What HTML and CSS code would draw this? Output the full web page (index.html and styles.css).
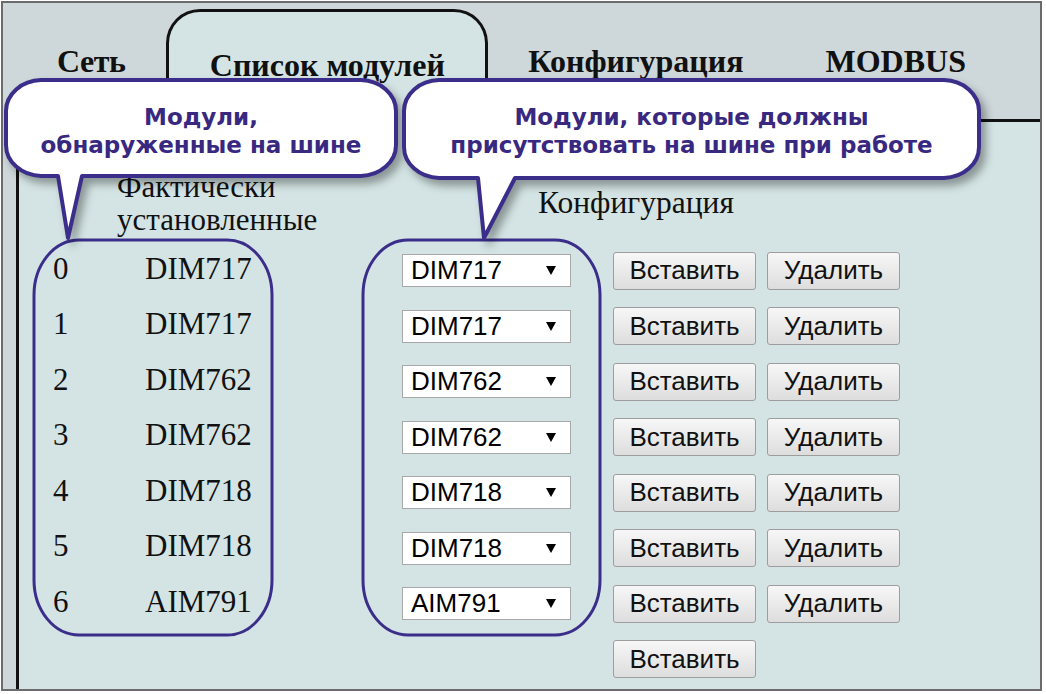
FILE: index.html
```html
<!DOCTYPE html>
<html lang="ru">
<head>
<meta charset="utf-8">
<title>Список модулей</title>
<link rel="stylesheet" href="styles.css">
</head>
<body>
<div class="screen">
  <div class="frame">
    <nav class="tabs">
      <div class="tab tab-net">Сеть</div>
      <div class="tab tab-active">Список модулей</div>
      <div class="tab tab-conf">Конфигурация</div>
      <div class="tab tab-modbus">MODBUS</div>
    </nav>
    <section class="panel">
      <div class="grid">
        <div class="head-actual">Фактически<br>установленные</div>
        <div class="head-conf">Конфигурация</div>

        <div class="idx">0</div><div class="name">DIM717</div>
        <div class="select"><span>DIM717</span><span class="arrow"></span></div>
        <button class="btn btn-ins">Вставить</button><button class="btn btn-del">Удалить</button>

        <div class="idx">1</div><div class="name">DIM717</div>
        <div class="select"><span>DIM717</span><span class="arrow"></span></div>
        <button class="btn btn-ins">Вставить</button><button class="btn btn-del">Удалить</button>

        <div class="idx">2</div><div class="name">DIM762</div>
        <div class="select"><span>DIM762</span><span class="arrow"></span></div>
        <button class="btn btn-ins">Вставить</button><button class="btn btn-del">Удалить</button>

        <div class="idx">3</div><div class="name">DIM762</div>
        <div class="select"><span>DIM762</span><span class="arrow"></span></div>
        <button class="btn btn-ins">Вставить</button><button class="btn btn-del">Удалить</button>

        <div class="idx">4</div><div class="name">DIM718</div>
        <div class="select"><span>DIM718</span><span class="arrow"></span></div>
        <button class="btn btn-ins">Вставить</button><button class="btn btn-del">Удалить</button>

        <div class="idx">5</div><div class="name">DIM718</div>
        <div class="select"><span>DIM718</span><span class="arrow"></span></div>
        <button class="btn btn-ins">Вставить</button><button class="btn btn-del">Удалить</button>

        <div class="idx">6</div><div class="name">AIM791</div>
        <div class="select"><span>AIM791</span><span class="arrow"></span></div>
        <button class="btn btn-ins">Вставить</button><button class="btn btn-del">Удалить</button>

        <button class="btn btn-ins btn-last">Вставить</button>
      </div>
    </section>
  </div>

  <svg class="overlay" width="1046" height="694" viewBox="0 0 1046 694">
    <rect class="bracket" x="34" y="240" width="238" height="395" rx="45" ry="55"/>
    <rect class="bracket" x="363" y="240" width="237" height="395" rx="45" ry="55"/>
    <path class="bubble" d="M41 80 H361 A36 31 0 0 1 396 111 V145 A36 31 0 0 1 361 176 H82 L68 238 L58 176 H41 A36 31 0 0 1 6 145 V111 A36 31 0 0 1 41 80 Z"/>
    <path class="bubble" d="M439 80 H944 A36 31 0 0 1 979 111 V147 A36 31 0 0 1 944 178 H515 L484 238 L478 178 H439 A36 31 0 0 1 404 147 V111 A36 31 0 0 1 439 80 Z"/>
  </svg>
  <div class="callout-text callout-left">Модули,<br>обнаруженные на шине</div>
  <div class="callout-text callout-right">Модули, которые должны<br>присутствовать на шине при работе</div>
</div>
</body>
</html>
```

FILE: styles.css
```css
html, body {
  margin: 0;
  padding: 0;
  background: #ffffff;
}

.screen {
  position: relative;
  width: 1046px;
  height: 694px;
  overflow: hidden;
}

.frame {
  margin: 1px 0 0 1px;
  width: 1041px;
  height: 690px;
  box-sizing: border-box;
  border: 2px solid #6b6b6b;
  background: #ced8da;
  display: flex;
  flex-direction: column;
  overflow: hidden;
}

/* ---------- tabs ---------- */
.tabs {
  height: 116px;
  flex: none;
  display: flex;
  align-items: flex-end;
  padding-left: 54px;
  font-family: "Liberation Serif", "Times New Roman", serif;
  font-weight: bold;
  font-size: 32px;
  line-height: 34px;
  color: #111;
}

.tab {
  padding-bottom: 41px;
  white-space: nowrap;
}

.tab-net {
  letter-spacing: -0.5px;
}

.tab-active {
  position: relative;
  z-index: 1;
  box-sizing: border-box;
  width: 322px;
  height: 113px;
  margin-left: 41px;
  margin-bottom: -3px;
  padding: 36px 0 0;
  text-align: center;
  background: #d4e4e4;
  border: 3px solid #111;
  border-bottom: none;
  border-radius: 34px 34px 0 0;
}

.tab-conf {
  margin-left: 40px;
}

.tab-modbus {
  margin-left: 82px;
}

/* ---------- panel ---------- */
.panel {
  flex: 1;
  margin-left: 13px;
  background: #d4e4e4;
  border-top: 3px solid #111;
  border-left: 3px solid #111;
}

.grid {
  display: grid;
  padding-left: 34px;
  grid-template-columns: 92px 257px 211px 154px 140px;
  grid-template-rows: 121px repeat(8, 55.5px);
  align-items: center;
  font-family: "Liberation Serif", "Times New Roman", serif;
  font-size: 31px;
  color: #111;
}

.head-actual {
  grid-column: 1 / 3;
  align-self: start;
  margin-top: 48px;
  padding-left: 64px;
  line-height: 33px;
}

.head-conf {
  grid-column: 3 / 6;
  align-self: start;
  margin-top: 64px;
  padding-left: 136px;
  line-height: 33px;
  font-size: 31.5px;
}

.idx,
.name {
  line-height: 34px;
  padding-bottom: 4px;
}

.select {
  box-sizing: border-box;
  width: 169px;
  height: 33px;
  background: #ffffff;
  border: 1px solid #a8a8a8;
  display: flex;
  align-items: center;
  justify-content: space-between;
  padding: 0 14px 0 8px;
  font-family: "Liberation Sans", Arial, sans-serif;
  font-size: 26px;
  color: #000;
}

.arrow {
  width: 0;
  height: 0;
  border-left: 5px solid transparent;
  border-right: 5px solid transparent;
  border-top: 9px solid #000;
}

.btn {
  box-sizing: border-box;
  height: 38px;
  margin: 0;
  padding: 0;
  background: linear-gradient(#f7f7f7, #dddddd);
  border: 1px solid #9d9d9d;
  border-radius: 3px;
  font-family: "Liberation Sans", Arial, sans-serif;
  font-size: 26px;
  color: #111;
  text-align: center;
}

.btn-ins {
  width: 143px;
}

.btn-del {
  width: 133px;
}

.btn-last {
  grid-column: 4;
}

/* ---------- callouts ---------- */
.overlay {
  position: absolute;
  left: 0;
  top: 0;
  z-index: 2;
  pointer-events: none;
}

.bracket {
  fill: none;
  stroke: #3b2e8b;
  stroke-width: 3;
}

.bubble {
  fill: #ffffff;
  stroke: #3b2e8b;
  stroke-width: 4;
  stroke-linejoin: round;
  filter: drop-shadow(5px 6px 4px rgba(0, 0, 0, 0.35));
}

.callout-text {
  position: absolute;
  z-index: 3;
  top: 103px;
  text-align: center;
  font-family: "DejaVu Sans", Verdana, sans-serif;
  font-weight: bold;
  font-size: 23px;
  line-height: 28px;
  color: #38287f;
}

.callout-left {
  left: 6px;
  width: 390px;
}

.callout-right {
  left: 404px;
  width: 575px;
}
```
